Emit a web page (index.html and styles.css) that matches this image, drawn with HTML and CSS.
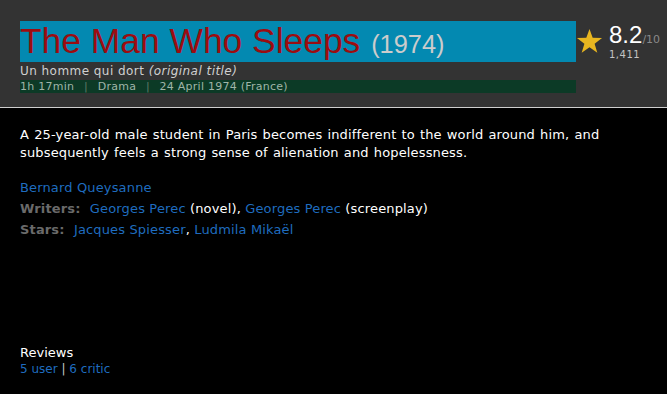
FILE: index.html
```html
<!DOCTYPE html>
<html>
<head>
<meta charset="utf-8">
<link rel="stylesheet" href="styles.css">
</head>
<body>
<div class="header">
  <div class="title-row">
    <div class="title-col">
      <h1 class="title">The Man Who Sleeps <span class="year">(1974)</span></h1>
      <div class="orig">Un homme qui dort <em>(original title)</em></div>
      <div class="meta">1h 17min <span class="sep">|</span> Drama <span class="sep">|</span> 24 April 1974 (France)</div>
    </div>
    <div class="rating">
      <svg class="star" width="27" height="26" viewBox="0 0 28 26"><polygon points="14,0.5 17.3,9.6 27,9.8 19.3,15.8 22.1,25.2 14,19.6 5.9,25.2 8.7,15.8 1,9.8 10.7,9.6" fill="#e8b620"/></svg>
      <div class="score">
        <div class="score-line"><span class="num">8.2</span><span class="of">/10</span></div>
        <div class="count">1,411</div>
      </div>
    </div>
  </div>
</div>
<div class="main">
  <p class="plot">A 25-year-old male student in Paris becomes indifferent to the world around him, and subsequently feels a strong sense of alienation and hopelessness.</p>
  <div class="credits">
    <div class="credit"><a class="link">Bernard Queysanne</a></div>
    <div class="credit"><span class="label">Writers:</span> <a class="link">Georges Perec</a> (novel), <a class="link">Georges Perec</a> (screenplay)</div>
    <div class="credit"><span class="label">Stars:</span> <a class="link">Jacques Spiesser</a>, <a class="link">Ludmila Mikaël</a></div>
  </div>
  <div class="reviews">
    <div class="rev-title">Reviews</div>
    <div class="rev-links"><a class="link">5 user</a> <span class="bar">|</span> <a class="link">6 critic</a></div>
  </div>
</div>
</body>
</html>
```
FILE: styles.css
```css
html, body {
  margin: 0;
  padding: 0;
  background: #000;
  font-family: "DejaVu Sans", Verdana, sans-serif;
}
.header {
  background: #333333;
  height: 108px;
  border-bottom: 1px solid #cfcfcf;
  padding: 21px 0 0 20px;
  box-sizing: border-box;
  overflow: hidden;
}
.title-row {
  display: flex;
  align-items: flex-start;
}
.title-col {
  width: 556px;
  flex-shrink: 0;
}
.title {
  margin: 0;
  height: 41px;
  background: #0389b1;
  font-family: "Liberation Sans", Arial, sans-serif;
  font-weight: normal;
  font-size: 35.4px;
  line-height: 41px;
  color: #9c0c10;
  white-space: nowrap;
}
.year {
  font-size: 25.4px;
  color: #cccccc;
  margin-left: 1px;
}
.orig {
  margin-top: 1px;
  font-size: 12px;
  line-height: 16px;
  letter-spacing: 0.45px;
  color: #d0d0d0;
}
.meta {
  margin-top: 1px;
  height: 13px;
  background: #0c3a26;
  font-size: 11px;
  line-height: 14px;
  letter-spacing: 0.25px;
  color: #9fb5a8;
}
.sep {
  color: #5c7a66;
  padding: 0 6px;
}
.rating {
  display: flex;
  align-items: flex-start;
  flex-shrink: 0;
}
.star {
  display: block;
  margin-top: 7px;
}
.score {
  margin-left: 6px;
  margin-top: 2px;
}
.score-line {
  line-height: 24px;
  white-space: nowrap;
}
.num {
  font-family: "Liberation Sans", Arial, sans-serif;
  font-size: 24px;
  color: #ffffff;
}
.of {
  font-size: 11px;
  color: #8a8a8a;
}
.count {
  font-size: 10px;
  line-height: 10px;
  letter-spacing: 0.5px;
  color: #c4c4c4;
  margin-top: -2px;
}
.main {
  padding: 18px 20px 0;
  color: #ffffff;
  font-size: 13px;
  letter-spacing: 0.15px;
}
.plot {
  margin: 0;
  line-height: 18px;
  width: 627px;
  word-spacing: 0.8px;
}
.credits {
  margin-top: 15px;
}
.credit {
  line-height: 21px;
}
.link {
  color: #1f6cbf;
  text-decoration: none;
}
.label {
  color: #6a6a6a;
  font-weight: bold;
  margin-right: 5px;
}
.reviews {
  margin-top: 105px;
}
.rev-title {
  line-height: 16px;
  letter-spacing: 0;
}
.rev-links {
  font-size: 12px;
  line-height: 16px;
  letter-spacing: 0;
}
.bar {
  color: #c8c8c8;
}
```
